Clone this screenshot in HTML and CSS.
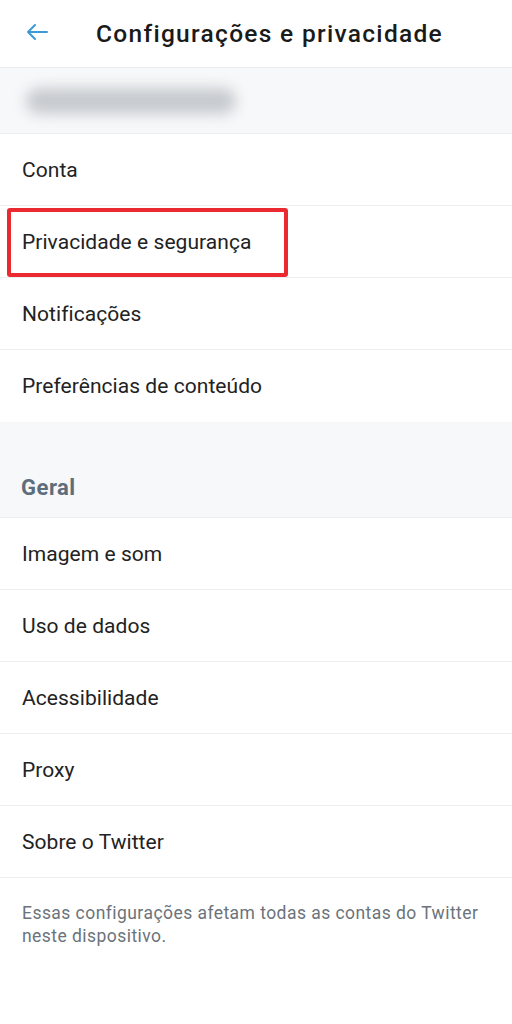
FILE: index.html
```html
<!DOCTYPE html>
<html lang="pt">
<head>
<meta charset="utf-8">
<link rel="stylesheet" href="styles.css">
</head>
<body>
<div class="app">
  <header class="topbar">
    <span class="back">
      <svg width="24" height="20" viewBox="0 0 24 20"><path d="M22 10H3M10 3L3 10L10 17" fill="none" stroke="#3d9ad6" stroke-width="2" stroke-linecap="round" stroke-linejoin="round"/></svg>
    </span>
    <h1 class="title">Configurações e privacidade</h1>
  </header>
  <div class="account"><span class="blur"></span></div>
  <ul class="list">
    <li class="item">Conta</li>
    <li class="item highlighted"><span class="mark">Privacidade e segurança</span></li>
    <li class="item">Notificações</li>
    <li class="item last">Preferências de conteúdo</li>
  </ul>
  <div class="section">Geral</div>
  <ul class="list">
    <li class="item">Imagem e som</li>
    <li class="item">Uso de dados</li>
    <li class="item">Acessibilidade</li>
    <li class="item">Proxy</li>
    <li class="item">Sobre o Twitter</li>
  </ul>
  <p class="note">Essas configurações afetam todas as contas do Twitter neste dispositivo.</p>
</div>
</body>
</html>
```
FILE: styles.css
```css
* { box-sizing: border-box; }
html, body { margin: 0; padding: 0; background: #fff; }
body { font-family: Roboto, "Noto Sans", sans-serif; color: #1c1c1c; }
.app { width: 512px; }
.topbar {
  height: 68px;
  display: flex;
  align-items: center;
  border-bottom: 1px solid #e9ecee;
}
.back { width: 96px; padding-left: 25px; display: flex; align-items: center; height: 20px; margin-top: -4px; }
.back svg { display: block; }
.title { margin: 0; font-size: 24.5px; font-weight: 500; color: #1a1a1a; letter-spacing: 1.3px; margin-top: -1px; white-space: nowrap; }
.account {
  height: 66px;
  background: #f7f8f9;
  border-bottom: 1px solid #eceeef;
  display: flex;
  align-items: center;
  padding-left: 26px;
}
.blur {
  width: 210px; height: 26px; border-radius: 13px;
  background: #c6cacf;
  filter: blur(7px);
}
.list { list-style: none; margin: 0; padding: 0; }
.item {
  height: 72px;
  display: flex;
  align-items: center;
  padding-left: 22px;
  font-size: 21px;
  letter-spacing: 0.05px;
  border-bottom: 1px solid #eceeef;
  color: #222;
}
.list .last { border-bottom: none; }
.highlighted { padding-left: 7px; }
.mark {
  display: flex; align-items: center;
  width: 281px; height: 69px;
  border: 4px solid #ea2a30;
  border-radius: 3px;
  padding-left: 11px;
  margin-top: 1px;
}
.section {
  height: 96px;
  background: #f7f8f9;
  display: flex; align-items: flex-end;
  padding: 0 0 17px 21px;
  font-size: 22px; font-weight: 700;
  letter-spacing: 0.5px;
  color: #5d6d7c;
  border-bottom: 1px solid #eceeef;
}
.note {
  margin: 0;
  padding: 24px 22px 0 22px;
  font-size: 17.5px;
  letter-spacing: 0.45px;
  line-height: 23px;
  color: #6b737b;
}
```
